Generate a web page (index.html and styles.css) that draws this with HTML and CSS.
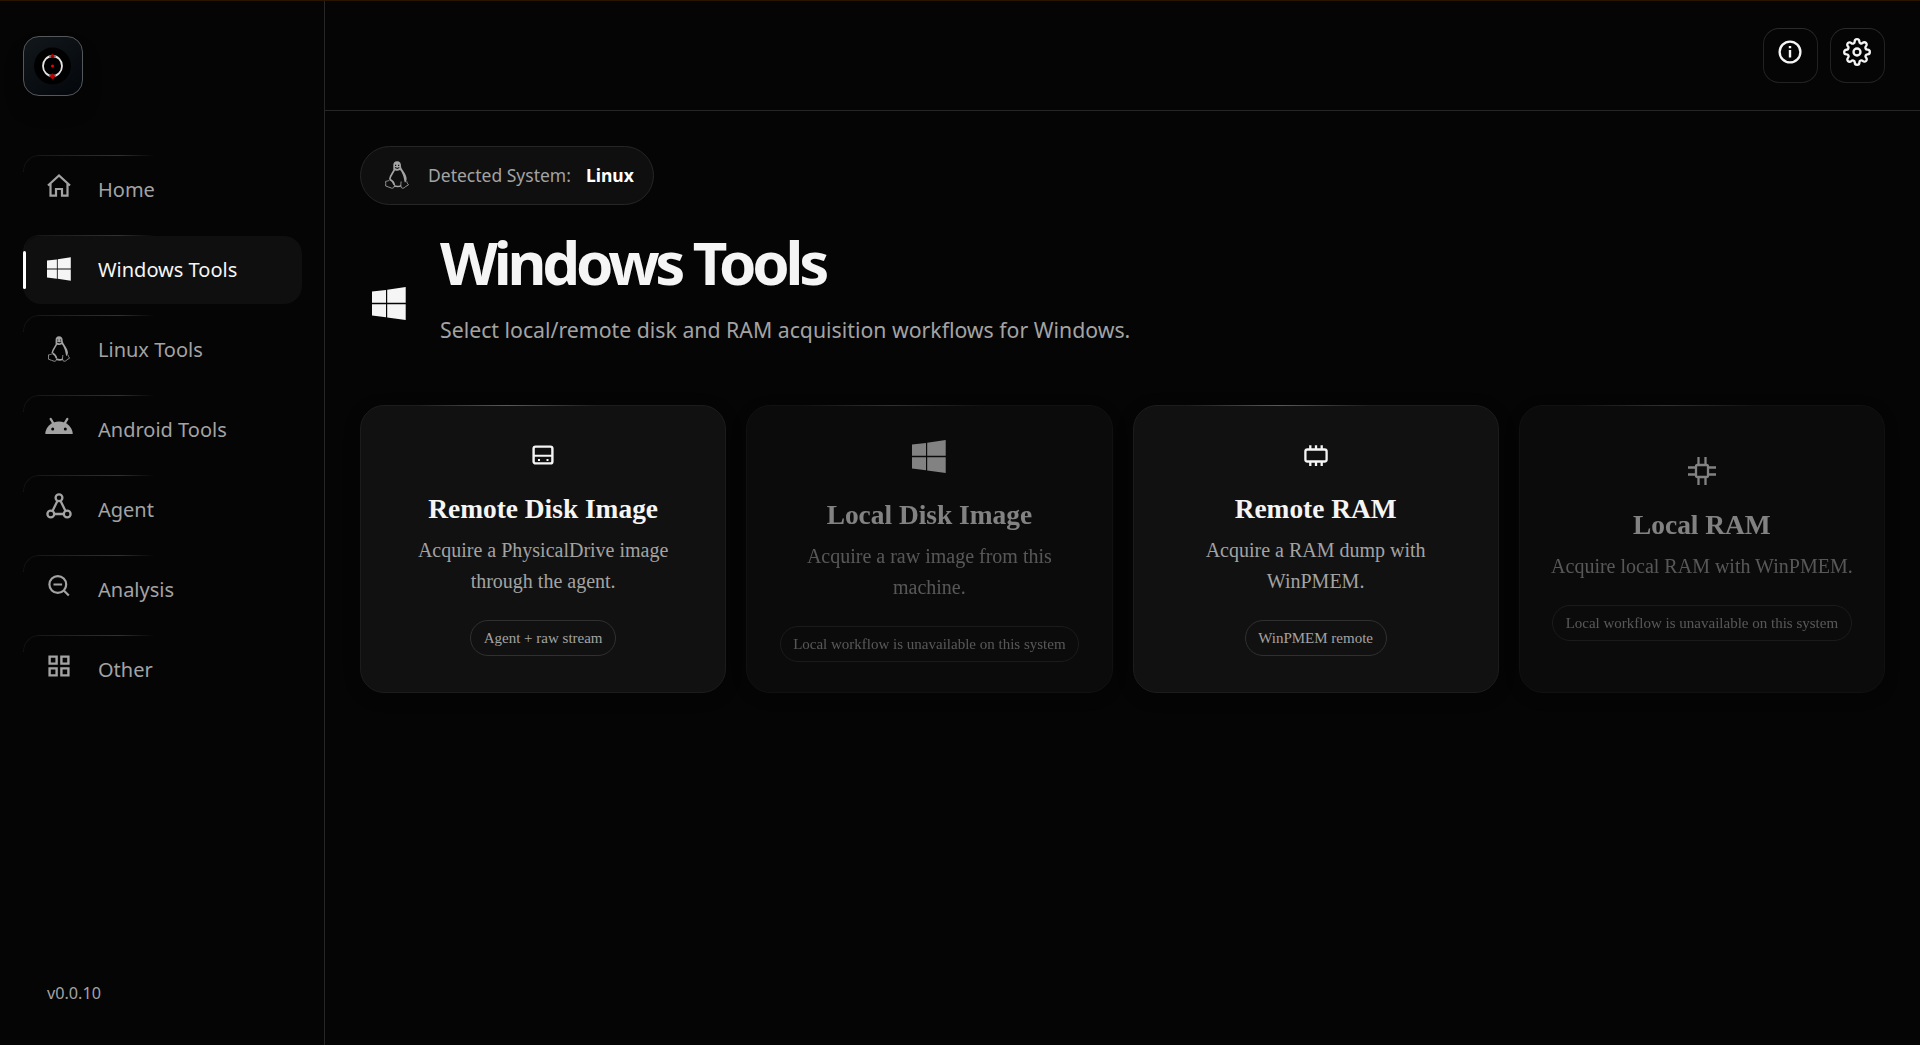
FILE: index.html
```html
<!DOCTYPE html>
<html lang="en">
<head>
  <meta charset="UTF-8" />
  <meta name="viewport" content="width=device-width, initial-scale=1" />
  <title>Windows Tools</title>
  <link rel="stylesheet" href="styles.css">
</head>
<body>

<!-- Shared icons -->
<svg class="sprite">
  <symbol id="win" viewBox="0 0 34 33">
    <path d="M0 4.600 14 2.900v12.800H0zM15.200 2.700 33.700 0v15.700H15.200zM0 17.200h14v13L0 28.400zM15.200 17.200h18.500V33l-18.500-2.600z" fill="currentColor"/>
  </symbol>
  <symbol id="tux" viewBox="0 0 24 28">
    <path d="M8.300 5C8 2 9.500.2 12 .2s4.300 1.800 4 5.100c0 3 5.200 7 5.600 12.300.1 1.900-.6 3.500-1.700 4-.8-2-.9-5-2-7.600-1.100-2.300-1.900-4.400-2.900-5-1.500 1-3.900 1-5.200.2L8.300 8z" fill="currentColor"/>
    <path d="M9.500 8C9 11 5.200 14 4.700 18.500M5 18.500c2 1 4 3.300 4.300 5.500M9 24.800c2 .9 5.500.9 7-.2" fill="none" stroke="currentColor" stroke-width="1.700"/>
    <path d="M4.500 19c-.8 1-2.500 1-3.800 1.300.4 1.700-.3 3.300 0 4.700 2 1 4.500 1.300 6 2.200 1.500.2 2.700-.7 2.600-2.200M16.200 20.500c-.4 2.500-.7 4.500.2 6.200 1.600 1.200 3.200 0 4.300-1.200l2.800-1.700c-.8-1-1.700-2-1.700-3.500" fill="none" stroke="currentColor" stroke-width=".9"/>
    <path d="M10 4.400h1.200M13 4.400h1.200M10 6.500l2.300.9 2-.9" fill="none" stroke="#111" stroke-width="1.100"/>
  </symbol>
</svg>

<div class="app">
  <aside class="sidebar">
    <div class="logo">
      <svg width="38" height="38" viewBox="0 0 38 38">
        <circle cx="18.500" cy="19" r="18.500" fill="#000"/>
        <ellipse cx="18.500" cy="19" rx="9.500" ry="10" fill="none" stroke="#e4e4e4" stroke-width="1.800"/>
        <path d="M15 9.300q3.500-1.500 7 0M15 28.700q3.500 1.500 7 0" fill="none" stroke="#777" stroke-width="1.800"/>
        <path d="M16.700 9.200h3.600M18.500 6.800v4M18.500 26.500v5.500" stroke="#a00" stroke-width="1.600"/>
        <circle cx="18.500" cy="29.200" r="2.300" fill="#b00"/>
        <circle cx="18.500" cy="19" r="1.500" fill="#e00"/>
      </svg>
    </div>

    <nav class="nav">
      <a class="nav-item">
        <svg class="icon" viewBox="0 0 28 28"><path d="M3 13.500 14 3.500l11 10M5.500 11.500v12.200H11V17h6v6.700h5.500V11.500" fill="none" stroke="currentColor" stroke-width="2.200"/></svg>
        <span>Home</span>
      </a>
      <a class="nav-item active">
        <svg class="glyph"><use href="#win"/></svg>
        <span>Windows Tools</span>
      </a>
      <a class="nav-item">
        <svg class="glyph tux"><use href="#tux"/></svg>
        <span>Linux Tools</span>
      </a>
      <a class="nav-item">
        <svg class="icon" viewBox="0 0 28 28">
          <path d="M.3 22a13.700 12.500 0 0 1 27.400 0z" fill="currentColor"/>
          <path d="m5.700 7 3 5M22.300 7l-3 5" stroke="currentColor" stroke-width="2.400" stroke-linecap="round"/>
          <circle cx="7.700" cy="17" r="1.500" fill="#050505"/><circle cx="20.300" cy="17" r="1.500" fill="#050505"/>
        </svg>
        <span>Android Tools</span>
      </a>
      <a class="nav-item">
        <svg class="icon" viewBox="0 0 28 28"><g fill="none" stroke="currentColor" stroke-width="2.300"><circle cx="14" cy="5.800" r="3.400"/><circle cx="5.800" cy="22" r="3.400"/><circle cx="22.200" cy="22" r="3.400"/><path d="M12.400 9 7.500 19M15.600 9l4.900 10M9.200 22h9.600"/></g></svg>
        <span>Agent</span>
      </a>
      <a class="nav-item">
        <svg class="icon" viewBox="0 0 28 28"><g fill="none" stroke="currentColor" stroke-width="2.200"><circle cx="12.800" cy="12.500" r="8.400"/><path d="m18.800 18.500 5 5M8.500 12.500h8.600"/></g></svg>
        <span>Analysis</span>
      </a>
      <a class="nav-item">
        <svg class="icon" viewBox="0 0 28 28"><path d="M4.600 4.600h7v7h-7zM16.400 4.600h7v7h-7zM4.600 16.400h7v7h-7zM16.400 16.400h7v7h-7z" fill="none" stroke="currentColor" stroke-width="2.400"/></svg>
        <span>Other</span>
      </a>
    </nav>

    <div class="version">v0.0.10</div>
  </aside>

  <div class="content">
    <header class="topbar">
      <button class="icon-btn">
        <svg width="28" height="28" viewBox="0 0 28 28"><circle cx="14" cy="14" r="10.400" fill="none" stroke="currentColor" stroke-width="2.300"/><path d="M14 12v7.500M14 8v2.200" stroke="currentColor" stroke-width="2.400"/></svg>
      </button>
      <button class="icon-btn">
        <svg width="28" height="28" viewBox="0 0 24 24" fill="none" stroke="currentColor" stroke-width="2"><circle cx="12" cy="12" r="3"/><path d="M19.400 15a1.650 1.650 0 0 0 .33 1.820l.06.06a2 2 0 0 1 0 2.830 2 2 0 0 1-2.830 0l-.06-.06a1.650 1.650 0 0 0-1.820-.33 1.650 1.650 0 0 0-1 1.510V21a2 2 0 0 1-2 2 2 2 0 0 1-2-2v-.09A1.650 1.650 0 0 0 9 19.400a1.650 1.650 0 0 0-1.820.33l-.06.06a2 2 0 0 1-2.830 0 2 2 0 0 1 0-2.830l.06-.06a1.650 1.650 0 0 0 .33-1.820 1.650 1.650 0 0 0-1.510-1H3a2 2 0 0 1-2-2 2 2 0 0 1 2-2h.09A1.650 1.650 0 0 0 4.600 9a1.650 1.650 0 0 0-.33-1.820l-.06-.06a2 2 0 0 1 0-2.830 2 2 0 0 1 2.830 0l.06.06a1.650 1.650 0 0 0 1.820.33H9a1.650 1.650 0 0 0 1-1.510V3a2 2 0 0 1 2-2 2 2 0 0 1 2 2v.09a1.650 1.650 0 0 0 1 1.510 1.650 1.650 0 0 0 1.820-.33l.06-.06a2 2 0 0 1 2.830 0 2 2 0 0 1 0 2.830l-.06.06a1.650 1.650 0 0 0-.33 1.820V9a1.650 1.650 0 0 0 1.510 1H21a2 2 0 0 1 2 2 2 2 0 0 1-2 2h-.09a1.650 1.650 0 0 0-1.510 1z"/></svg>
      </button>
    </header>

    <main class="main">
      <div class="system-pill">
        <svg class="pill-tux"><use href="#tux"/></svg>
        <span>Detected System:</span>
        <strong>Linux</strong>
      </div>

      <div class="page-head">
        <svg class="head-icon"><use href="#win"/></svg>
        <div class="head-text">
          <h1>Windows Tools</h1>
          <p>Select local/remote disk and RAM acquisition workflows for Windows.</p>
        </div>
      </div>

      <div class="cards">
        <div class="card">
          <svg class="card-icon" viewBox="0 0 28 28"><rect x="4.600" y="5.600" width="18.800" height="16.800" rx="2" fill="none" stroke="currentColor" stroke-width="2.400"/><path d="M4 14.700h20M9 18.900h2M17.500 18.900h2" stroke="currentColor" stroke-width="2"/></svg>
          <h2>Remote Disk Image</h2>
          <p>Acquire a PhysicalDrive image through the agent.</p>
          <span class="tag">Agent + raw stream</span>
        </div>
        <div class="card disabled">
          <div class="card-glyph"><svg><use href="#win"/></svg></div>
          <h2>Local Disk Image</h2>
          <p>Acquire a raw image from this machine.</p>
          <span class="tag">Local workflow is unavailable on this system</span>
        </div>
        <div class="card">
          <svg class="card-icon" viewBox="0 0 28 28"><g fill="none" stroke="currentColor" stroke-width="2.300"><rect x="3.400" y="8.500" width="21.200" height="12" rx="2"/><path d="M8.300 4.200v4.300M14 4.200v4.300M19.700 4.200v4.300M8.300 20.500v4.400M14 20.500v4.400M19.700 20.500v4.400"/></g></svg>
          <h2>Remote RAM</h2>
          <p>Acquire a RAM dump with WinPMEM.</p>
          <span class="tag">WinPMEM remote</span>
        </div>
        <div class="card disabled">
          <svg class="card-icon" viewBox="0 0 28 28"><g fill="none" stroke="currentColor" stroke-width="2.300"><rect x="8" y="8" width="12" height="12" rx="1.500"/><path d="M10.500 0v7M17.500 0v7M10.500 21v7M17.500 21v7M0 10.500h7M0 17.500h7M21 10.500h7M21 17.500h7"/></g></svg>
          <h2>Local RAM</h2>
          <p>Acquire local RAM with WinPMEM.</p>
          <span class="tag">Local workflow is unavailable on this system</span>
        </div>
      </div>
    </main>
  </div>
</div>

</body>
</html>
```
FILE: styles.css
```css
* {
  box-sizing: border-box;
}
body {
  margin: 0;
  height: 100vh;
  overflow: hidden;
  background: #050505;
  color: #f5f5f5;
  font-family: "Noto Sans", sans-serif;
}
h1, h2, p {
  margin: 0;
}
.sprite {
  display: none;
}
.app {
  display: flex;
  height: 100vh;
  border-top: 1px solid #2a1500;
}

/* Sidebar */
.sidebar {
  width: 325px;
  flex: none;
  display: flex;
  flex-direction: column;
  padding: 35px 22px 40px 23px;
  border-right: 1px solid #262626;
}
.logo {
  display: flex;
  align-items: center;
  justify-content: center;
  width: 60px;
  height: 60px;
  border: 1px solid #55585b;
  border-radius: 16px;
  background: linear-gradient(145deg, #12171b, #03070b);
  box-shadow: 0 14px 20px rgba(0, 0, 0, 0.2);
}
.nav {
  display: flex;
  flex-direction: column;
  gap: 12px;
  margin-top: 60px;
}
.nav-item {
  position: relative;
  display: flex;
  align-items: center;
  gap: 25px;
  height: 68px;
  padding: 0 0 2px 22px;
  border-radius: 18px;
  color: #a3a3a3;
  font-size: 20px;
}
/* soft highlight along the top left edge */
.nav-item::before {
  content: "";
  position: absolute;
  top: -1px;
  left: 0;
  width: 140px;
  height: 16px;
  border-top: 1px solid #323232;
  border-left: 1px solid #323232;
  border-radius: 16px 0 0 0;
  mask-image: linear-gradient(90deg, rgba(0, 0, 0, 0.3), #000 68%, transparent 94%);
}
.nav-item.active {
  background: #0f0f0f;
  color: #f5f5f5;
}
.nav-item.active::after {
  content: "";
  position: absolute;
  left: 0;
  top: 15px;
  width: 3px;
  height: 38px;
  border-radius: 3px;
  background: #fff;
}
.icon {
  width: 28px;
  height: 28px;
  margin-bottom: 7px;
}
.glyph {
  width: 24px;
  height: 24px;
  margin: 0 2px;
}
.glyph.tux {
  height: 26px;
}
.version {
  margin-top: auto;
  padding-left: 24px;
  color: #a3a3a3;
  font-size: 16.200px;
  line-height: 24px;
}

/* Content */
.content {
  flex: 1;
  min-width: 0;
}
.topbar {
  display: flex;
  justify-content: flex-end;
  gap: 12px;
  height: 110px;
  padding: 27px 35px 0;
  border-bottom: 1px solid #262626;
}
.icon-btn {
  width: 55px;
  height: 55px;
  padding: 0 2px 8px 0;
  display: flex;
  align-items: center;
  justify-content: center;
  border: 1px solid #222;
  border-top-color: #2b2b2b;
  border-radius: 16px;
  background: #050505;
  color: #f5f5f5;
}
.main {
  padding: 35px 35px 0;
}
.system-pill {
  display: flex;
  align-items: center;
  width: 294px;
  height: 59px;
  padding: 0 0 2px 24px;
  border: 1px solid #262626;
  border-radius: 30px;
  background: #0f0f0f;
  color: #a3a3a3;
  font-size: 17.500px;
}
.system-pill strong {
  margin-left: 15px;
  color: #fff;
}
.pill-tux {
  width: 24px;
  height: 28px;
  margin-right: 19px;
}
.page-head {
  display: flex;
  align-items: center;
  height: 144px;
  margin-top: 26px;
}
.head-icon {
  width: 34px;
  height: 33px;
  margin: 0 34px 0 12px;
}
.head-text {
  height: 142px;
}
.page-head h1 {
  font-size: 60px;
  line-height: 60px;
  letter-spacing: -0.07em;
}
.page-head p {
  margin-top: 21px;
  color: #a3a3a3;
  font-size: 21.280px;
  line-height: 34px;
}

/* Cards */
.cards {
  display: grid;
  grid-template-columns: repeat(4, 1fr);
  gap: 20px;
  margin-top: 30px;
}
.card {
  position: relative;
  display: flex;
  flex-direction: column;
  align-items: center;
  justify-content: center;
  height: 288px;
  padding: 0 28px 1px;
  border: 1px solid #1c1c1c;
  border-radius: 24px;
  background: #111;
  box-shadow: 0 4px 16px rgba(0, 0, 0, 0.3);
  font-family: "Liberation Serif", serif;
  text-align: center;
}
.card::before {
  content: "";
  position: absolute;
  top: -1px;
  left: 15%;
  width: 50%;
  height: 1px;
  background: linear-gradient(90deg, transparent, #5a5a5a 50%, transparent);
}
.card.disabled {
  opacity: 0.52;
}
.card-icon {
  width: 28px;
  height: 28px;
}
.card-glyph {
  height: 40px;
  padding-top: 5px;
}
.card-glyph svg {
  display: block;
  width: 34px;
  height: 33px;
}
.card h2 {
  margin-top: 24px;
  font-size: 27.400px;
  line-height: 32px;
}
.card p {
  margin-top: 10px;
  color: #a3a3a3;
  font-size: 20px;
  line-height: 31px;
}
.tag {
  margin-top: 23px;
  padding: 0 12.500px;
  border: 1px solid #303030;
  border-radius: 18px;
  color: #a3a3a3;
  font-size: 15px;
  line-height: 34px;
  white-space: nowrap;
}
```
